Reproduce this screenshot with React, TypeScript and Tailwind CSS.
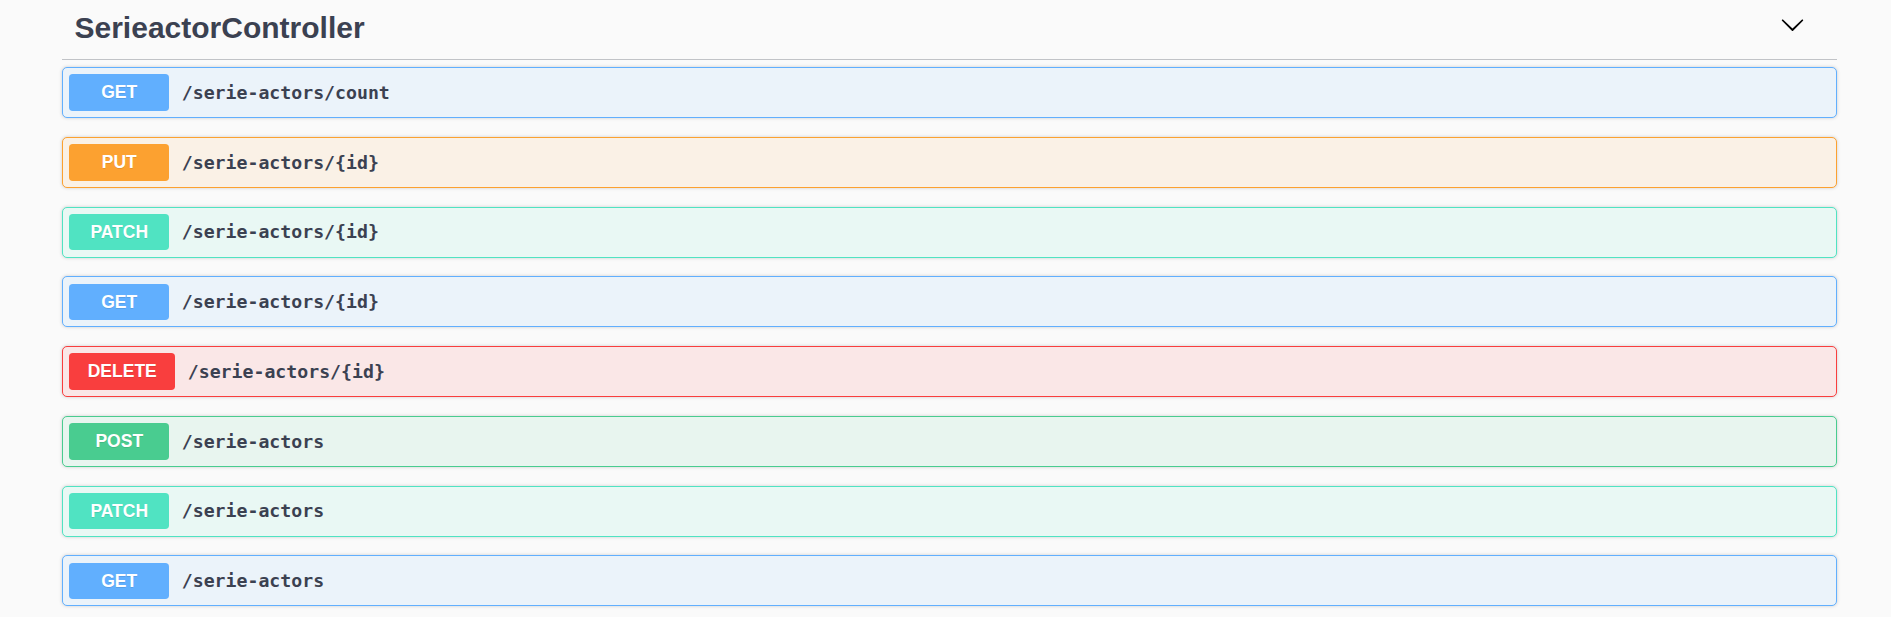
import React from "react";

type Method = "GET" | "PUT" | "PATCH" | "DELETE" | "POST";

interface Operation {
  method: Method;
  path: string;
}

const methodStyles: Record<Method, { block: string; badge: string }> = {
  GET: { block: "bg-[#ebf3fa] border-[#61affe]", badge: "bg-[#61affe] w-[100px]" },
  PUT: { block: "bg-[#faf1e6] border-[#fca130]", badge: "bg-[#fca130] w-[100px]" },
  PATCH: { block: "bg-[#e9f8f4] border-[#50e3c2]", badge: "bg-[#50e3c2] w-[100px]" },
  DELETE: { block: "bg-[#fae7e7] border-[#f93e3e]", badge: "bg-[#f93e3e] w-[106px]" },
  POST: { block: "bg-[#e8f5ef] border-[#49cc90]", badge: "bg-[#49cc90] w-[100px]" },
};

const operations: Operation[] = [
  { method: "GET", path: "/serie-actors/count" },
  { method: "PUT", path: "/serie-actors/{id}" },
  { method: "PATCH", path: "/serie-actors/{id}" },
  { method: "GET", path: "/serie-actors/{id}" },
  { method: "DELETE", path: "/serie-actors/{id}" },
  { method: "POST", path: "/serie-actors" },
  { method: "PATCH", path: "/serie-actors" },
  { method: "GET", path: "/serie-actors" },
];

const OpBlock: React.FC<{ op: Operation }> = ({ op }) => {
  const s = methodStyles[op.method];
  return (
    <div
      className={`mb-[18.75px] h-[51px] border rounded-[5px] shadow-[0_0_3.75px_rgba(0,0,0,0.19)] flex items-center px-[6.25px] ${s.block}`}
    >
      <span
        className={`h-[36.5px] rounded-[3.75px] flex items-center justify-center text-white font-bold text-[17.5px] [text-shadow:0_1.25px_0_rgba(0,0,0,0.1)] ${s.badge}`}
        style={{ fontFamily: '"Liberation Sans", Arial, sans-serif' }}
      >
        {op.method}
      </span>
      <span
        className="pl-[12.5px] text-[18.2px] font-bold text-[#3b4151]"
        style={{ fontFamily: '"DejaVu Sans Mono", monospace' }}
      >
        {op.path}
      </span>
    </div>
  );
};

export default function App() {
  return (
    <div className="min-h-[617px] bg-[#fafafa] overflow-hidden">
      <div className="ml-[62px] w-[1775px]">
        <div className="h-[60px] border-b border-[#c1c3c7] flex items-start pl-[12.5px]">
          <h3
            className="pt-[9.6px] text-[30px] leading-[36px] font-bold text-[#3b4151]"
            style={{ fontFamily: '"Liberation Sans", Arial, sans-serif' }}
          >
            SerieactorController
          </h3>
          <svg
            className="ml-auto mt-[12.4px] mr-[32px] w-[25px] h-[25px] text-black"
            viewBox="0 0 20 20"
            fill="currentColor"
          >
            <path d="M17.418 6.109c.272-.268.709-.268.979 0s.271.701 0 .969l-7.908 7.83c-.27.268-.707.268-.979 0l-7.908-7.83c-.27-.268-.27-.701 0-.969.271-.268.709-.268.979 0L10 13.25l7.418-7.141z" />
          </svg>
        </div>
        <div className="mt-[7px]">
          {operations.map((op, i) => (
            <OpBlock key={i} op={op} />
          ))}
        </div>
      </div>
    </div>
  );
}
